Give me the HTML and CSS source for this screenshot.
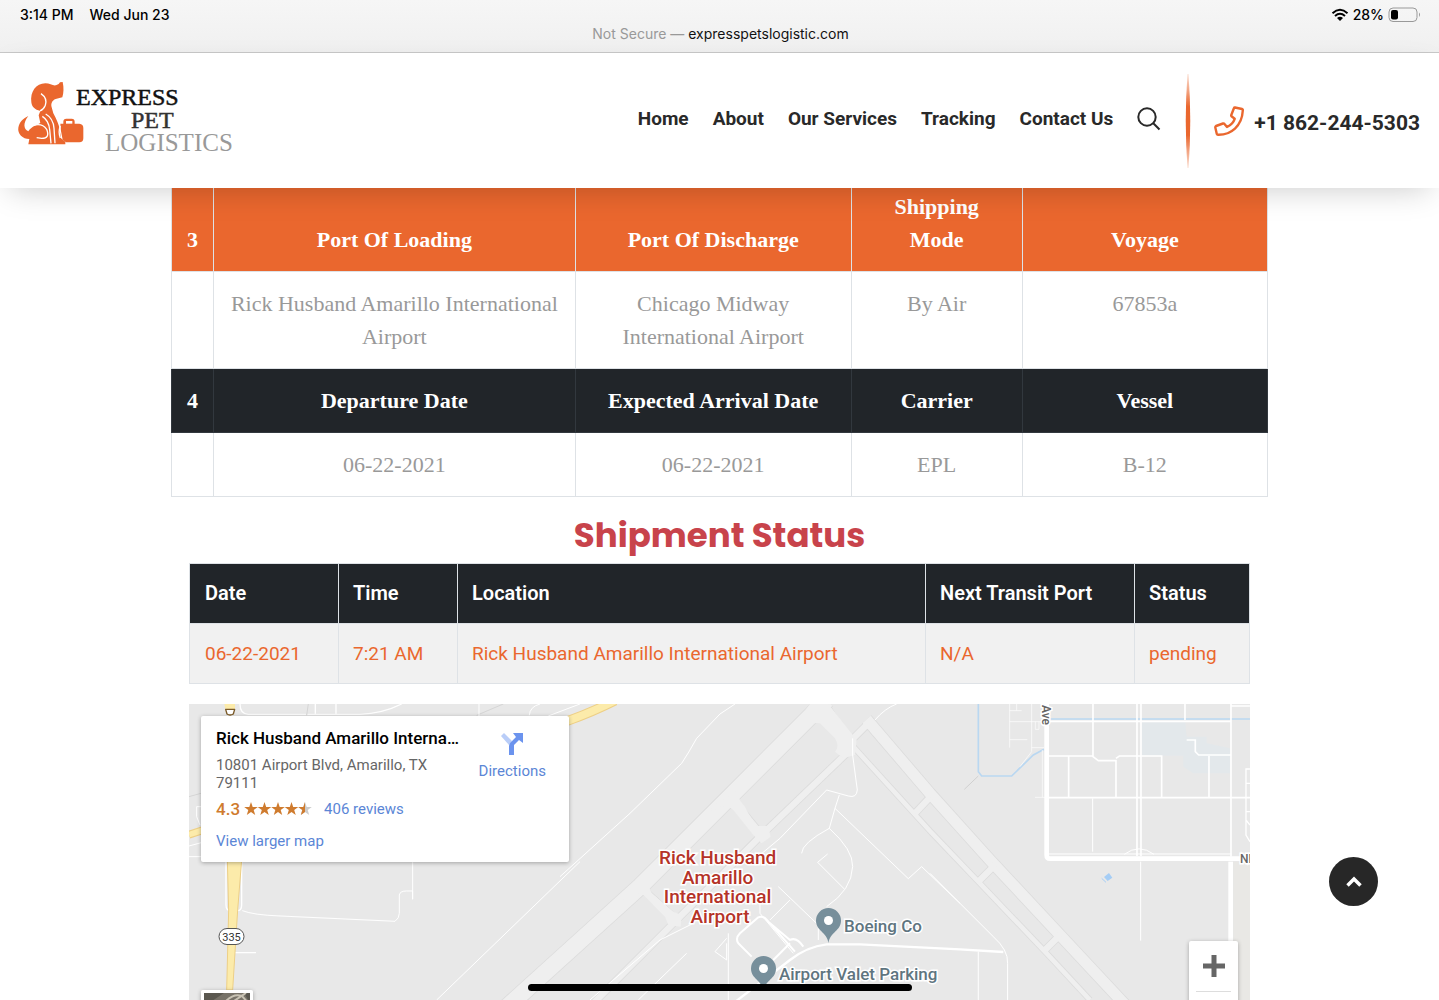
FILE: index.html
```html
<!DOCTYPE html>
<html lang="en">
<head>
    <meta charset="UTF-8">
    <meta name="viewport" content="width=device-width, initial-scale=1.0">
    <title>Express Pet Logistics - Tracking</title>
    <link rel="stylesheet" href="styles.css">
</head>
<body>
    <div class="browser-bar">
        <div class="status-row">
            <div class="status-left"><span>3:14 PM</span><span>Wed Jun 23</span></div>
            <div class="status-right">
                <svg width="18" height="14" viewBox="0 0 18 14" fill="none" stroke="#000" stroke-width="2">
                    <path d="M1.5 5.2Q9-1.6 16.500 5.200M4 8Q9 3.600 14 8"/>
                    <path d="M9 13L6 10Q9 7.600 12 10Z" fill="#000" stroke="none"/>
                </svg>
                <span>28%</span>
                <svg width="33" height="16" viewBox="0 0 33 16">
                    <rect x="1" y="1" width="28" height="13.500" rx="4" fill="none" stroke="#999"/>
                    <rect x="3" y="3" width="7" height="9.500" rx="2"/>
                    <path d="M31 5.500Q33 7.500 31 10Z" fill="#999"/>
                </svg>
            </div>
        </div>
        <div class="address">Not Secure — <span>expresspetslogistic.com</span></div>
    </div>

    <header class="header">
        <a href="#" class="logo" aria-label="Express Pet Logistics">
            <svg width="224" height="76" viewBox="16 78 224 76">
                <g transform="translate(10 75) scale(.3333)">
                    <path fill="#ea672e" d="M64 82C60 50 78 26 106 25C120 25 128 33 138 31Q148 28 150 22L158 21C162 38 161 54 157 67L137 72C126 76 122 87 125 97L130 115C140 135 147 148 149 165L153 190L166 200V208H55L58 192C38 192 22 176 25 158C28 141 40 130 55 123C39 143 40 162 55 169C65 154 80 150 91 144L86 121L91 108C74 104 66 96 64 82Z"/>
                    <path fill="#ea672e" d="M151 146H160V140Q160 131 169 131H185Q194 131 194 140V146H208Q220 147 220 159V190Q220 202 208 202H168L158 194L153 168Z"/>
                    <rect x="168" y="138" width="19" height="8" fill="#fff"/>
                    <g fill="none" stroke="#fff" stroke-width="4">
                        <path d="M93 56Q113 70 106 91Q101 104 90 108M107 117Q130 130 132 160L135 205M97 124Q117 137 119 164L123 205M71 151Q97 144 110 163Q121 190 95 190L80 188M151 153Q144 171 151 189"/>
                    </g>
                </g>
                <g font-family="'Liberation Serif', serif" font-size="24">
                    <text x="76" y="105" fill="#111" stroke="#111" stroke-width=".5">EXPRESS</text>
                    <text x="131" y="128" fill="#333" stroke="#333" stroke-width=".5">PET</text>
                    <text x="105" y="151" fill="#999" font-size="25">LOGISTICS</text>
                </g>
            </svg>
        </a>
        <nav class="nav">
            <a href="#">Home</a>
            <a href="#">About</a>
            <a href="#">Our Services</a>
            <a href="#">Tracking</a>
            <a href="#">Contact Us</a>
            <button type="button" class="search-btn" aria-label="Search">
                <svg width="24" height="24" viewBox="0 0 24 24" fill="none" stroke="#292929" stroke-width="2">
                    <circle cx="10" cy="10" r="8.700"/>
                    <path d="M16.300 16.300L22.500 22.500"/>
                </svg>
            </button>
        </nav>
        <svg class="divider" width="6" height="94" viewBox="0 0 6 94">
            <defs>
                <linearGradient id="fade" x1="0" y1="0" x2="0" y2="1">
                    <stop offset="0" stop-color="#ea672e" stop-opacity=".2"/>
                    <stop offset=".35" stop-color="#ea672e"/>
                    <stop offset=".65" stop-color="#ea672e"/>
                    <stop offset="1" stop-color="#ea672e" stop-opacity=".2"/>
                </linearGradient>
            </defs>
            <path fill="url(#fade)" d="M2.500 0H3.500Q7 47 3.500 94H2.500Q-1 47 2.500 0Z"/>
        </svg>
        <a href="tel:+18622445303" class="phone">
            <svg width="30" height="30" viewBox="0 0 30 30" fill="none" stroke="#ea672e" stroke-width="2.400" stroke-linejoin="round">
                <path d="M21 1.500L28 3Q29 3.300 28.800 4.500C28 20 17 29 4 28.700Q3 28.700 2.800 28L1.300 21.500Q1.200 20.500 2 20L9 17.500Q10 17.300 10.500 18L13 21Q19 18 20.700 12.800L17.500 10.300Q17 9.800 17.300 9L20 2Q20.200 1.400 21 1.500Z"/>
            </svg>
            <span>+1 862-244-5303</span>
        </a>
    </header>

    <main class="container">
        <table class="cargo-table">
            <colgroup>
                <col class="col-no">
                <col class="col-loading">
                <col class="col-discharge">
                <col class="col-mode">
                <col>
            </colgroup>
            <tr class="row-orange">
                <th>3</th>
                <th>Port Of Loading</th>
                <th>Port Of Discharge</th>
                <th>Shipping Mode</th>
                <th>Voyage</th>
            </tr>
            <tr>
                <td></td>
                <td>Rick Husband Amarillo International Airport</td>
                <td>Chicago Midway International Airport</td>
                <td>By Air</td>
                <td>67853a</td>
            </tr>
            <tr class="row-dark">
                <th>4</th>
                <th>Departure Date</th>
                <th>Expected Arrival Date</th>
                <th>Carrier</th>
                <th>Vessel</th>
            </tr>
            <tr>
                <td></td>
                <td>06-22-2021</td>
                <td>06-22-2021</td>
                <td>EPL</td>
                <td>B-12</td>
            </tr>
        </table>

        <section class="shipment">
            <h2>Shipment Status</h2>
            <table class="status-table">
                <colgroup>
                    <col class="col-date">
                    <col class="col-time">
                    <col>
                    <col class="col-port">
                    <col class="col-status">
                </colgroup>
                <thead>
                    <tr>
                        <th>Date</th>
                        <th>Time</th>
                        <th>Location</th>
                        <th>Next Transit Port</th>
                        <th>Status</th>
                    </tr>
                </thead>
                <tbody>
                    <tr>
                        <td>06-22-2021</td>
                        <td>7:21 AM</td>
                        <td>Rick Husband Amarillo International Airport</td>
                        <td>N/A</td>
                        <td>pending</td>
                    </tr>
                </tbody>
            </table>

            <div class="map">
                <svg class="map-canvas" viewBox="189 704 1061 296" preserveAspectRatio="xMidYMin slice">
                    <!-- west side: highway 335 -->
                    <g transform="translate(180 690) scale(.3333)" fill="none" stroke="#fff" stroke-width="4" stroke-linejoin="round">
                        <path d="M180 42Q180 72 205 73H540Q610 70 665 42M406 42V72M468 42V72" />
                        <path d="M27 320L70 308M380 76L385 42M890 76L970 42" stroke="#d5d5d5" stroke-width="3"/>
                        <path d="M897 42V80M1048 76Q1050 50 1080 42M1105 78L1200 42M27 468L64 458M27 500H64M64 350H50V380L60 405" stroke-width="3"/>
                        <path d="M138 510V645Q138 662 152 662H172Q185 662 185 645V510M158 788H228"/>
                        <path d="M187 662Q220 675 300 678L645 694Q658 685 658 670V615Q660 603 680 603H698V628V510" stroke-width="3"/>
                        <path d="M1200 515L770 930" stroke-width="3"/>
                        <path d="M142 510H185L173 660L158 900H140L146 660Z" fill="#fcebaa" stroke="#edcf86" stroke-width="3"/>
                        <path d="M27 434L70 420" stroke="#edcf86" stroke-width="24"/>
                        <path d="M27 434L70 420" stroke="#fcebaa" stroke-width="17"/>
                        <path d="M1160 94Q1240 65 1305 32" stroke="#edcf86" stroke-width="29"/>
                        <path d="M1160 94Q1240 65 1305 32" stroke="#fcebaa" stroke-width="23"/>
                        <path d="M133 42H165V56L160 72Q150 79 141 72L136 56Z" fill="#fcebaa" stroke="none"/>
                        <path d="M137 58H164L160 72Q150 78 141 72Z" fill="#fff" stroke="#7b5a28"/>
                    </g>
                    <!-- runways -->
                    <g transform="translate(560 690) scale(.3333)" fill="none" stroke-linejoin="round">
                        <g stroke="#dcdcdc">
                            <path d="M800 30L510 320L240 590L-180 970" stroke-width="54"/>
                            <path d="M790 30L880 170L1110 423L1255 575L1460 790L1590 930" stroke-width="19"/>
                            <path d="M920 88L1110 310L1290 510L1500 735L1710 960" stroke-width="38"/>
                            <path d="M860 190L605 435L350 690L100 940M510 320L605 435M240 590L350 690M880 145L925 100M1065 370L1110 322M1255 575L1305 525M1455 780L1500 735" stroke-width="24"/>
                        </g>
                        <g stroke="#efefef">
                            <path d="M800 30L510 320L240 590L-180 970" stroke-width="49"/>
                            <path d="M790 30L880 170L1110 423L1255 575L1460 790L1590 930" stroke-width="14"/>
                            <path d="M920 88L1110 310L1290 510L1500 735L1710 960" stroke-width="33"/>
                            <path d="M860 190L605 435L350 690L100 940M510 320L605 435M240 590L350 690M880 145L925 100M1065 370L1110 322M1255 575L1305 525M1455 780L1500 735" stroke-width="19"/>
                        </g>
                        <path d="M750 42H805L890 150L885 195L850 205L825 185Q840 170 825 145L780 100Q755 95 735 115L715 90ZM455 350L535 300Q530 325 555 350L565 370L590 408H625L632 440L605 460L580 435L520 360Q495 335 455 365ZM190 620L275 560Q260 585 275 610L340 665L365 675L362 710L325 705L315 680L250 615Q220 600 190 630Z" fill="#efefef"/>
                        <g stroke="#fff" stroke-width="3">
                            <path d="M0 560L210 370L365 220Q385 190 410 145L480 72L525 42M945 90Q975 55 1010 42"/>
                            <path d="M878 145V195L892 300Q890 325 865 318L800 300L660 445L600 495M838 315L825 355L1045 566L1085 530L1200 640"/>
                            <path d="M825 355L808 415Q725 460 725 490M808 415Q880 480 878 530Q875 600 800 650M803 492L773 517L853 597M655 590L775 705V750"/>
                            <path d="M630 690L690 630M600 640V670L700 790M505 730V930M380 790L235 930M90 930L300 750L400 700M500 745L465 785L500 810V760"/>
                        </g>
                        <path d="M575 800L535 760Q525 745 540 730L595 682Q610 675 625 695L690 750Q710 740 730 770M630 700L705 785M640 810L690 760" stroke="#fff" stroke-width="6"/>
                        <path d="M1330 786L1200 778L900 763H800Q740 770 690 810L520 940" stroke="#fff" stroke-width="7"/>
                        <path d="M1110 550L1300 740Q1345 780 1343 820V930M1255 785V930" stroke="#fff" stroke-width="3"/>
                    </g>
                    <!-- street grid to the east -->
                    <g transform="translate(930 690) scale(.3333)" fill="none" stroke="#fff" stroke-width="5">
                        <path d="M910 515H970V940H910Z" fill="#e9e8e5" stroke="none"/>
                        <path d="M636 97H766L770 140H830V160L900 175V250H790L760 230V197H636Z" fill="#e3e8eb" stroke="none"/>
                        <path d="M145 42V245L155 258H245L310 195L342 178M350 87H960" stroke="#b9d7f1" stroke-width="5"/>
                        <path d="M522 561L537 549L547 563L533 573Z" fill="#a5cdf5" stroke="none"/>
                        <path d="M515 565L528 577" stroke="#a5cdf5" stroke-width="3"/>
                        <path d="M103 298L145 258" stroke="#d0d0d0" stroke-width="3"/>
                        <path d="M239 42V173M239 95H345M305 42V185L270 230M239 149H292M305 173H342M239 62H275M260 42V62M337 180V322M315 322H350M316 95V118H327V95" stroke-width="2"/>
                        <path d="M355 94H905M355 198H487L505 212H558V320M558 205L568 198H695V320M416 198V320M489 42V198M355 323H960M765 42V90M837 198V320M903 42V500M770 150H796V185L806 195H903M905 48H960"/>
                        <path d="M488 325V485M632 515V752M357 492H905M583 493Q627 460 672 493" stroke-width="3"/>
                        <path d="M621 42V498M633 42V498" stroke-width="5"/>
                        <path d="M350 42V495Q350 506 360 506H930" stroke-width="14"/>
                        <path d="M902 515V760" stroke-width="14"/>
                        <path d="M960 237H948V435L960 455M948 280H960M948 365H960M948 390L960 405" stroke-width="4"/>
                    </g>
                    <g class="map-small">
                        <text transform="translate(1042 705) rotate(90)">Ave</text>
                        <text x="1240" y="863">NE</text>
                    </g>
                    <rect x="219" y="928.500" width="25" height="16" rx="8" fill="#fff" stroke="#555"/>
                    <text class="map-shield" x="231.500" y="941">335</text>
                    <text class="map-airport">
                        <tspan x="720" y="864">Rick Husband</tspan>
                        <tspan x="720" y="884">Amarillo</tspan>
                        <tspan x="720" y="903">International</tspan>
                        <tspan x="720" y="923">Airport</tspan>
                    </text>
                    <g fill="#778f9b">
                        <path d="M828.500 943C827 932 816 931 816 920.500A12.500 12.500 0 0 1 841 920.500C841 931 830 932 828.500 943Z"/>
                        <path d="M763.500 991C762 980 751 979 751 968.500A12.500 12.500 0 0 1 776 968.500C776 979 765 980 763.500 991Z"/>
                    </g>
                    <circle cx="828.500" cy="920.500" r="4.500" fill="#fff"/>
                    <circle cx="763.500" cy="968.500" r="4.500" fill="#fff"/>
                    <g class="map-place">
                        <text x="844" y="932">Boeing Co</text>
                        <text x="779" y="980">Airport Valet Parking</text>
                    </g>
                </svg>

                <div class="place-card">
                    <div class="place-info">
                        <h3>Rick Husband Amarillo Interna…</h3>
                        <p>10801 Airport Blvd, Amarillo, TX 79111</p>
                        <div class="rating">
                            <strong>4.3</strong>
                            <svg width="68" height="14" viewBox="0 0 68 14">
                                <defs>
                                    <path id="star" d="M7 0L8.700 5H13.800L9.700 8L11.200 13L7 10L2.800 13L4.300 8L.2 5H5.300Z"/>
                                </defs>
                                <g fill="#cf7b2e">
                                    <use href="#star"/>
                                    <use href="#star" x="13.500"/>
                                    <use href="#star" x="27"/>
                                    <use href="#star" x="40.500"/>
                                </g>
                                <use href="#star" x="54" fill="#ccc"/>
                                <path fill="#cf7b2e" d="M61 0V10L56.800 13L58.300 8L54.200 5H59.300Z"/>
                            </svg>
                            <a href="#">406 reviews</a>
                        </div>
                        <a href="#">View larger map</a>
                    </div>
                    <a href="#" class="directions">
                        <svg width="24" height="24" viewBox="0 0 24 24">
                            <path fill="#b9cdf8" d="M1 4L4 1L12 9L9 13Z"/>
                            <path fill="#6b93ee" d="M9 23V14Q9 12 10.500 10.500L16 5L13 1H23V11L19 8L14 13V23Z"/>
                        </svg>
                        <span>Directions</span>
                    </a>
                </div>

                <button type="button" class="map-type" aria-label="Show satellite imagery">
                    <svg width="46" height="46" viewBox="0 0 46 46">
                        <rect width="46" height="46" fill="#777268"/>
                        <path d="M0 0H20L8 8H0ZM40 0H46V10Z" fill="#5a574f"/>
                        <path d="M22 8Q30 0 38 3L46 12M30 8L42 0" fill="none" stroke="#c9c3b4" stroke-width="2"/>
                    </svg>
                </button>

                <div class="map-zoom">
                    <button type="button" aria-label="Zoom in">
                        <svg width="22" height="22" viewBox="0 0 22 22"><path fill="#666" d="M8.500 0H13.500V8.500H22V13.500H13.500V22H8.500V13.500H0V8.500H8.500Z"/></svg>
                    </button>
                    <button type="button" aria-label="Zoom out">
                        <svg width="22" height="22" viewBox="0 0 22 22"><path fill="#666" d="M0 8.500H22V13.500H0Z"/></svg>
                    </button>
                </div>
            </div>
        </section>
    </main>

    <button type="button" class="to-top" aria-label="Back to top">
        <svg width="16" height="12" viewBox="0 0 16 12" fill="none" stroke="#fff" stroke-width="3.500">
            <path d="M1.500 9.500L8 3L14.500 9.500"/>
        </svg>
    </button>
    <div class="home-indicator"></div>
</body>
</html>
```
FILE: styles.css
```css
* {
    box-sizing: border-box;
}

body {
    display: flex;
    flex-direction: column;
    height: 100vh;
    margin: 0;
    overflow: hidden;
    font-family: Roboto, sans-serif;
    background: #fff;
}

a {
    color: inherit;
    text-decoration: none;
}

button {
    padding: 0;
    border: none;
    background: none;
    cursor: pointer;
}

svg {
    display: block;
}

/* Browser bar */
.browser-bar {
    flex: none;
    height: 53px;
    padding: 5px 18px 0 20px;
    border-bottom: 1px solid #c8c8c8;
    background: linear-gradient(#f6f6f6, #f0f0f0);
    font-family: Inter, sans-serif;
    font-size: 14px;
}

.status-row,
.status-left,
.status-right {
    display: flex;
    align-items: center;
    line-height: 20px;
}

.status-row {
    justify-content: space-between;
    font-weight: 500;
}

.status-left {
    gap: 16px;
}

.status-right {
    gap: 4px;
}

.address {
    line-height: 18px;
    text-align: center;
    color: #999;
}

.address span {
    color: #111;
}

/* Header */
.header {
    position: relative;
    z-index: 2;
    flex: none;
    display: flex;
    align-items: center;
    height: 135px;
    padding: 0 19px 0 16px;
    background: #fff;
    box-shadow: 0 10px 30px -10px rgba(0, 0, 0, 0.22);
    color: #292929;
}

.logo {
    margin: 0 auto 9px 0;
}

.nav {
    display: flex;
    align-items: center;
    gap: 24px;
    padding-bottom: 4px;
    font-size: 19px;
    font-weight: bold;
}

.divider {
    margin: 0 23px 0 24px;
}

.phone {
    display: flex;
    align-items: center;
    gap: 10px;
    font-size: 21px;
    font-weight: bold;
}

.phone span {
    padding-top: 5px;
}

/* Cargo table */
.container {
    flex: 1;
    display: flex;
    flex-direction: column;
    width: 100%;
    max-width: 1097px;
    min-height: 0;
    margin: 0 auto;
}

table {
    width: 100%;
    table-layout: fixed;
    border-collapse: collapse;
}

/* first row slides under the header */
.cargo-table {
    margin-top: -14px;
    font-family: "Liberation Serif", serif;
    font-size: 22px;
    line-height: 33px;
    text-align: center;
    color: #999;
}

.cargo-table th,
.cargo-table td {
    padding: 15px;
    border: 1px solid #dee2e6;
    vertical-align: top;
}

.cargo-table th {
    vertical-align: bottom;
    color: #fff;
}

.cargo-table th:first-child {
    padding: 15px 0;
}

.row-orange {
    background: #ea672e;
}

.row-dark {
    background: #212529;
}

.cargo-table .row-dark th {
    border-color: #32383e;
}

.col-no {
    width: 42px;
}

.col-loading {
    width: 33%;
}

.col-discharge {
    width: 276px;
}

.col-mode {
    width: 171px;
}

/* Shipment status */
.shipment {
    flex: 1;
    display: flex;
    flex-direction: column;
    min-height: 0;
    padding: 0 18px;
}

h2 {
    margin: 15px 0 5px;
    font-family: Poppins, Inter, sans-serif;
    font-size: 34px;
    line-height: 46px;
    text-align: center;
    color: #c8434b;
}

.status-table {
    font-size: 19px;
    line-height: 29px;
    text-align: left;
}

.status-table th,
.status-table td {
    padding: 15px 14px;
    border: 1px solid #dee2e6;
}

.status-table th:first-child,
.status-table td:first-child {
    padding-left: 15px;
}

.status-table th {
    background: #212529;
    font-size: 20px;
    font-weight: 600;
    color: #fff;
}

.status-table td {
    background: #f1f1f1;
    color: #ea672e;
}

.col-date {
    width: 149px;
}

.col-time {
    width: 119px;
}

.col-port {
    width: 209px;
}

.col-status {
    width: 115px;
}

/* Map */
.map {
    position: relative;
    flex: 1;
    min-height: 0;
    margin-top: 20px;
    overflow: hidden;
    background: #e8e8e8;
}

.map-canvas {
    width: 100%;
    height: 100%;
}

.map-small {
    font-size: 12px;
    font-weight: 500;
    fill: #666;
    stroke: #fff;
    stroke-width: 3px;
    paint-order: stroke;
}

.map-shield {
    font-size: 11px;
    text-anchor: middle;
    fill: #333;
}

.map-airport {
    font-size: 19px;
    font-weight: 500;
    text-anchor: middle;
    fill: #b53328;
    stroke: #fff;
    stroke-width: 3px;
    paint-order: stroke;
}

.map-place {
    font-size: 17px;
    font-weight: 500;
    fill: #5f7580;
    stroke: #fff;
    stroke-width: 3px;
    paint-order: stroke;
}

.place-card {
    position: absolute;
    top: 12px;
    left: 12px;
    display: flex;
    justify-content: space-between;
    width: 368px;
    padding: 12px 23px 12px 15px;
    border-radius: 2px;
    background: #fff;
    box-shadow: 0 1px 4px rgba(0, 0, 0, 0.3);
    font-size: 15px;
    line-height: 18px;
    color: #5b86d6;
}

.place-info {
    width: 246px;
}

.place-info h3 {
    margin: 0 0 8px;
    font-size: 17px;
    font-weight: 500;
    line-height: 20px;
    white-space: nowrap;
    color: #000;
}

.place-info p {
    width: 220px;
    margin: 0 0 8px;
    color: #666;
}

.rating {
    display: flex;
    align-items: center;
    gap: 4px;
    margin-bottom: 14px;
}

.rating strong {
    font-size: 17px;
    font-weight: 500;
    color: #cf7b2e;
}

.rating a {
    margin-left: 8px;
}

.directions {
    display: flex;
    flex-direction: column;
    align-items: center;
    gap: 6px;
    padding-top: 4px;
}

.map-type {
    position: absolute;
    top: 286px;
    left: 12px;
    border: 3px solid #fff;
    border-radius: 2px;
    box-shadow: 0 1px 4px rgba(0, 0, 0, 0.3);
}

.map-zoom {
    position: absolute;
    top: 237px;
    right: 12px;
    width: 49px;
    padding: 0 7px;
    border-radius: 2px;
    background: #fff;
    box-shadow: 0 1px 4px rgba(0, 0, 0, 0.3);
}

.map-zoom button {
    display: grid;
    place-items: center;
    width: 100%;
    height: 50px;
}

.map-zoom button + button {
    border-top: 1px solid #ddd;
}

.to-top {
    position: fixed;
    right: 61px;
    bottom: 94px;
    z-index: 3;
    display: grid;
    place-items: center;
    width: 49px;
    height: 49px;
    border-radius: 50%;
    background: #272727;
}

.home-indicator {
    position: fixed;
    bottom: 9px;
    left: 50%;
    z-index: 4;
    width: 384px;
    height: 7px;
    margin-left: -192px;
    border-radius: 4px;
    background: #000;
}
```
